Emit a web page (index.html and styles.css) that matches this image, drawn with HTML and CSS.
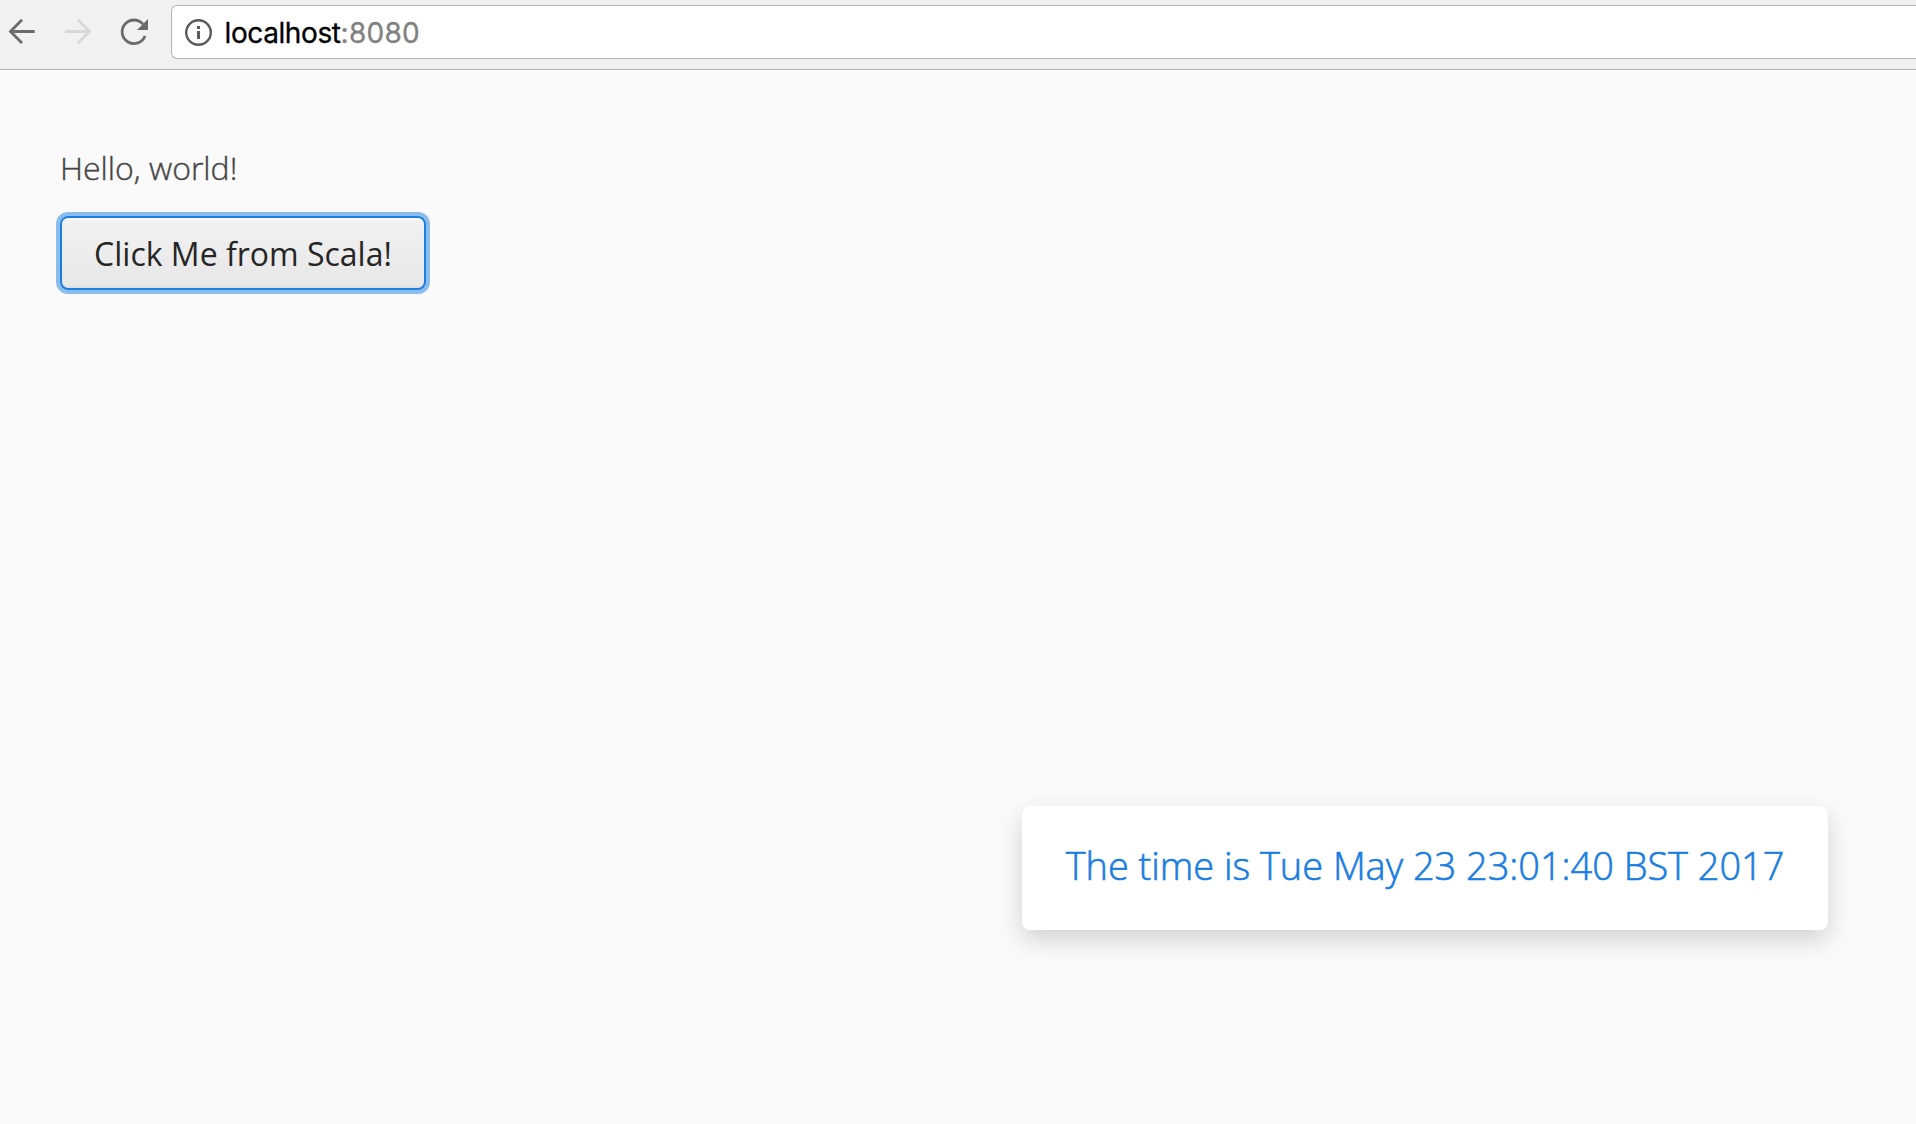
FILE: index.html
```html
<!DOCTYPE html>
<html lang="en">
<head>
<meta charset="utf-8">
<title>localhost:8080</title>
<link rel="stylesheet" href="styles.css">
</head>
<body>
<header class="toolbar">
  <svg class="nav-icons" width="171" height="69" viewBox="0 0 171 69" fill="none" stroke-width="2.8">
    <path d="M34.7 31.5H11M22 19.8 10.5 31.5 22 43" stroke="#6b6b6b"/>
    <path d="M65 31.5H89M78 19.8 89.5 31.5 78 43" stroke="#d8d8d8"/>
    <path d="M143 24.2A11.8 11.8 0 1 0 145 36" stroke="#6b6b6b"/>
    <path d="M148 19V30H137Z" fill="#6b6b6b"/>
  </svg>
  <div class="omnibox">
    <svg class="info" width="28" height="28" viewBox="0 0 28 28">
      <circle cx="14.5" cy="14.5" r="12.3" fill="none" stroke="#5a5a5a" stroke-width="2.4"/>
      <path d="M13 8h3v3h-3zM13 13h3v8h-3z" fill="#5a5a5a"/>
    </svg>
    <span class="url">localhost<span class="port">:8080</span></span>
  </div>
</header>
<main class="page">
  <p class="label">Hello, world!</p>
  <button class="button">Click Me from Scala!</button>
</main>
<div class="notification">The time is Tue May 23 23:01:40 BST 2017</div>
</body>
</html>
```
FILE: styles.css
```css
* { box-sizing: border-box; }
body {
  margin: 0;
  height: 1124px;
  overflow: hidden;
  background: #fafafa;
  font-family: "Open Sans", sans-serif;
}
.toolbar {
  display: flex;
  height: 70px;
  background: #f1f1f1;
  border-bottom: 1px solid #b4b4b4;
}
.nav-icons { flex: none; }
.omnibox {
  flex: 1;
  display: flex;
  align-items: center;
  height: 54px;
  margin-top: 5px;
  padding-left: 12px;
  background: #fff;
  border: 1px solid #b4b4b4;
  border-right: 0;
  border-radius: 6px 0 0 6px;
}
.url {
  margin-left: 12.5px;
  padding-top: 2px;
  font: 28px/50px Inter, sans-serif;
  letter-spacing: -0.4px;
  color: #000;
  -webkit-text-stroke: 0.3px;
}
.port {
  letter-spacing: 0.3px;
  color: #808080;
}
.page {
  display: flex;
  flex-direction: column;
  align-items: flex-start;
  padding: 73px 60px 0;
}
.label {
  margin: 0 0 23px;
  font-size: 32px;
  font-weight: 300;
  line-height: 50px;
  color: #464646;
  -webkit-text-stroke: 0.4px;
}
.button {
  width: 366px;
  height: 74px;
  padding: 2px 0 0;
  border: 2px solid #197de1;
  border-radius: 8px;
  background: linear-gradient(#f2f2f2, #e7e7e7);
  box-shadow: 0 0 0 4px rgba(25, 125, 225, 0.5), inset 0 2px 0 #f8f8f8, inset 0 -2px 0 #e1e1e1;
  font: 400 32px/68px "Open Sans", sans-serif;
  color: #262626;
  white-space: nowrap;
}
.notification {
  position: absolute;
  right: 88px;
  bottom: 194px;
  width: 806px;
  height: 124px;
  border-radius: 8px;
  background: #fff;
  box-shadow: 0 10px 25px rgba(0, 0, 0, 0.16);
  font-size: 37.9px;
  font-weight: 300;
  line-height: 118px;
  text-align: center;
  white-space: nowrap;
  color: #197de1;
  -webkit-text-stroke: 0.6px;
}
```
